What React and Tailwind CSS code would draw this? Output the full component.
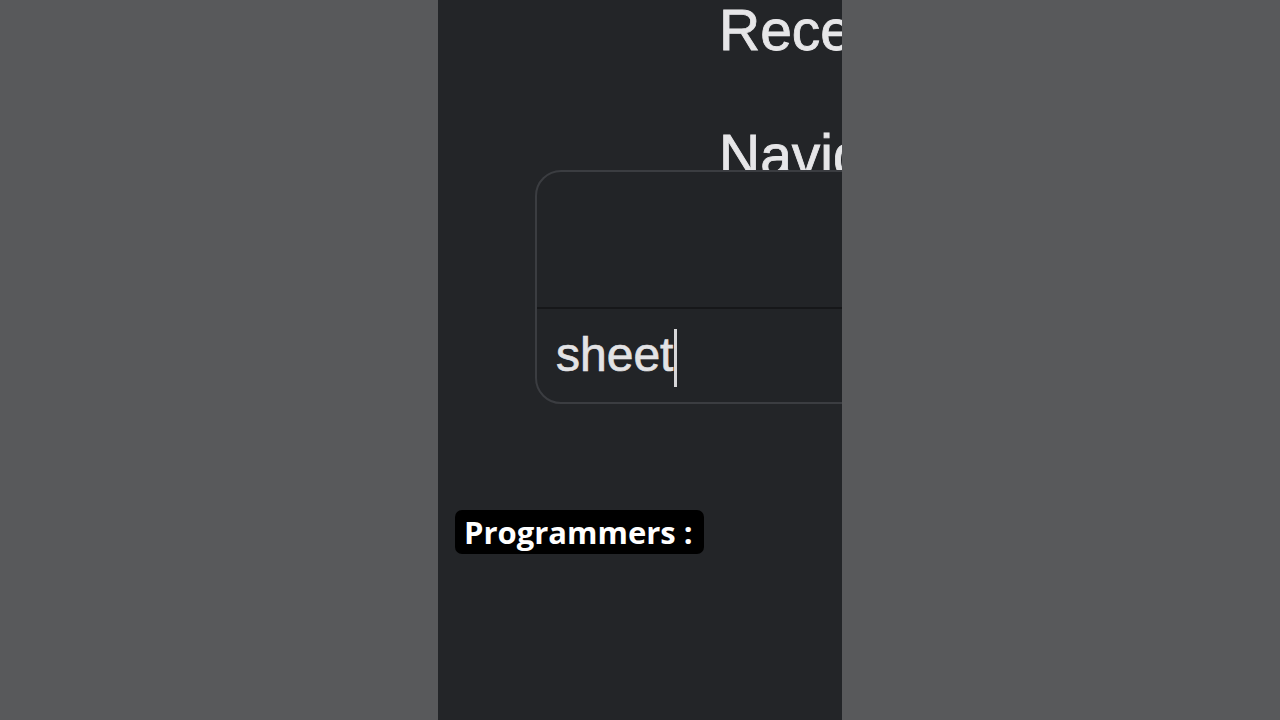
export default function App() {
  return (
    <div className="w-full h-[720px] bg-[#58595b] flex justify-center overflow-hidden">
      <div className="relative w-[404px] h-full bg-[#232528] overflow-hidden">
        <div
          className="flex flex-col pl-[281px] pt-[2px] text-[57px] leading-none text-[#e6e6e8] whitespace-nowrap [-webkit-text-stroke:0.8px_#e6e6e8]"
          style={{ fontFamily: '"Liberation Sans", Arial, sans-serif' }}
        >
          <div>Recent</div>
          <div className="mt-[68px]">Navigation</div>
        </div>

        <div className="absolute left-[97px] top-[170px] w-[440px] rounded-[26px] border-2 border-[#3b3d41] bg-[#222427] overflow-hidden">
          <div className="h-[137px] border-b-2 border-[#161719]"></div>
          <div
            className="flex items-center pl-[19px] pt-[20px] pb-[21px] text-[48px] leading-none text-[#e3e3e5] [-webkit-text-stroke:0.7px_#e3e3e5]"
            style={{ fontFamily: '"Liberation Sans", Arial, sans-serif' }}
          >
            <span>sheet</span>
            <span className="ml-[1px] w-[3px] h-[58px] bg-[#d6d6d8] -mb-[6px]"></span>
          </div>
        </div>

        <div className="absolute left-[17px] top-[510px] h-[44px] w-[249px] bg-black rounded-[7px] flex items-center pl-[9px]">
          <span
            className="text-white font-bold text-[31px] leading-none whitespace-nowrap"
            style={{ fontFamily: '"Open Sans", "Noto Sans", sans-serif' }}
          >
            Programmers :
          </span>
        </div>
      </div>
    </div>
  );
}
